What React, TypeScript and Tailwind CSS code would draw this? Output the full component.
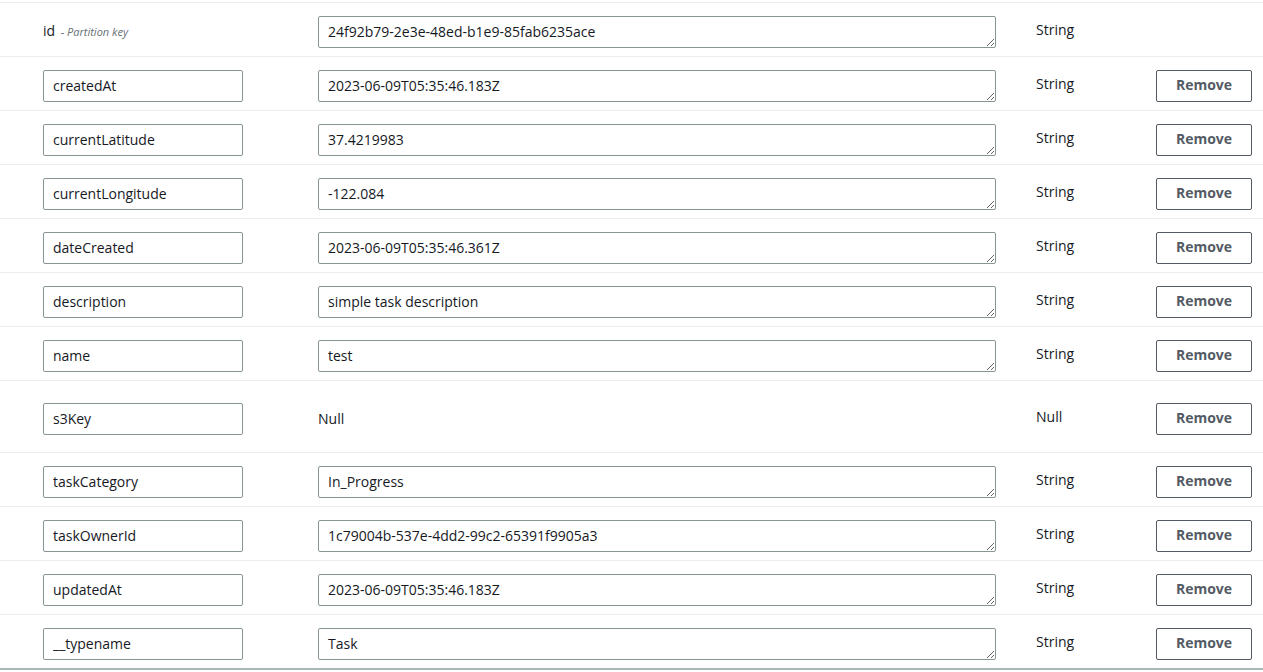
import React from "react";

type Row = { key: string; value: string | null; type: string; pk?: boolean };

const rows: Row[] = [
  { key: "id", value: "24f92b79-2e3e-48ed-b1e9-85fab6235ace", type: "String", pk: true },
  { key: "createdAt", value: "2023-06-09T05:35:46.183Z", type: "String" },
  { key: "currentLatitude", value: "37.4219983", type: "String" },
  { key: "currentLongitude", value: "-122.084", type: "String" },
  { key: "dateCreated", value: "2023-06-09T05:35:46.361Z", type: "String" },
  { key: "description", value: "simple task description", type: "String" },
  { key: "name", value: "test", type: "String" },
  { key: "s3Key", value: null, type: "Null" },
  { key: "taskCategory", value: "In_Progress", type: "String" },
  { key: "taskOwnerId", value: "1c79004b-537e-4dd2-99c2-65391f9905a3", type: "String" },
  { key: "updatedAt", value: "2023-06-09T05:35:46.183Z", type: "String" },
  { key: "__typename", value: "Task", type: "String" },
];

export default function App() {
  return (
    <div
      className="w-[1263px] h-[672px] bg-white pt-[2px] text-[14px] text-[#16191f] overflow-hidden"
      style={{ fontFamily: '"Open Sans", "Noto Sans", sans-serif' }}
    >
      <div className="border-b-2 border-[#aab7b8]">
        {rows.map((r, i) => {
          const isNull = r.value === null;
          return (
            <div
              key={r.key}
              className={
                "flex items-center border-t border-[#eaeded] pl-[43px] " +
                (isNull ? "pt-[22px] pb-[17px]" : "pt-[13px]") +
                (isNull ? "" : i === rows.length - 1 ? " pb-[8px]" : " pb-[8px]")
              }
            >
              <div className="w-[200px] h-[32px] flex items-center shrink-0">
                {r.pk ? (
                  <span className="leading-none pb-[2px]">
                    id{" "}
                    <span className="italic text-[11px] text-[#687078] ml-[2px]">- Partition key</span>
                  </span>
                ) : (
                  <input
                    readOnly
                    value={r.key}
                    className="w-[200px] h-[32px] border border-[#879596] rounded-[2px] px-[9px] pb-[1px] text-[14px] text-[#16191f] outline-none"
                  />
                )}
              </div>
              <div className="ml-[75px] w-[678px] h-[32px] shrink-0 flex items-center">
                {isNull ? (
                  <span className="pb-[2px]">Null</span>
                ) : (
                  <textarea
                    readOnly
                    rows={1}
                    value={r.value as string}
                    className="block w-[678px] h-[32px] border border-[#879596] rounded-[2px] px-[9px] py-[5px] text-[14px] leading-[20px] text-[#16191f] outline-none resize overflow-hidden"
                  />
                )}
              </div>
              <div className="ml-[40px] w-[120px] h-[32px] shrink-0 flex items-center pb-[5px] text-[#16191f]">
                {r.type}
              </div>
              {!r.pk && (
                <button className="w-[96px] h-[32px] border border-[#545b64] rounded-[2px] pb-[4px] text-[14px] font-bold text-[#545b64] bg-white">
                  Remove
                </button>
              )}
            </div>
          );
        })}
      </div>
    </div>
  );
}
